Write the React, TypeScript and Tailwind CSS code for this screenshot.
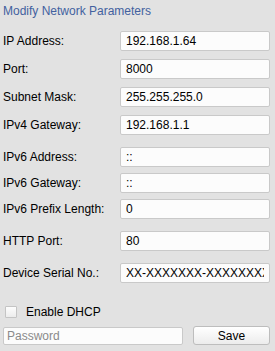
import { useState } from "react";

type Field = {
  label: string;
  value: string;
  gap: string;
};

const FIELDS: Field[] = [
  { label: "IP Address:", value: "192.168.1.64", gap: "mt-0" },
  { label: "Port:", value: "8000", gap: "mt-[8px]" },
  { label: "Subnet Mask:", value: "255.255.255.0", gap: "mt-[8px]" },
  { label: "IPv4 Gateway:", value: "192.168.1.1", gap: "mt-[8px]" },
  { label: "IPv6 Address:", value: "::", gap: "mt-[12px]" },
  { label: "IPv6 Gateway:", value: "::", gap: "mt-[6px]" },
  { label: "IPv6 Prefix Length:", value: "0", gap: "mt-[6px]" },
  { label: "HTTP Port:", value: "80", gap: "mt-[12px]" },
  { label: "Device Serial No.:", value: "XX-XXXXXXX-XXXXXXXX", gap: "mt-[12px]" },
];

export default function App() {
  const [values, setValues] = useState(FIELDS.map((f) => f.value));
  const [dhcp, setDhcp] = useState(false);
  const [password, setPassword] = useState("");

  return (
    <div className="w-[275px] h-[351px] bg-[#e2e2e2] text-[12px] text-black font-['Liberation_Sans',Arial,sans-serif] overflow-hidden">
      <div className="pl-[3px] pt-[4px] h-[31px] text-[12px] leading-[14px] text-[#42619f]">
        Modify Network Parameters
      </div>

      <div className="flex flex-col">
        {FIELDS.map((f, i) => (
          <div key={f.label} className={`flex items-center h-[20px] ${f.gap}`}>
            <label className="w-[120px] pl-[3px] shrink-0 leading-[14px]">{f.label}</label>
            <input
              value={values[i]}
              onChange={(e) => setValues(values.map((v, j) => (j === i ? e.target.value : v)))}
              className="w-[150px] h-[20px] px-[5px] bg-[#fcfcfc] border border-[#c9c9c9] rounded-[2px] text-[12px] text-black outline-none"
            />
          </div>
        ))}
      </div>

      {/* DHCP */}
      <label className="flex items-center h-[13px] mt-[22px] pl-[5px] gap-[9px]">
        <span
          onClick={() => setDhcp(!dhcp)}
          className="w-[12px] h-[12px] border border-[#c4c4c4] rounded-[1px] bg-gradient-to-b from-[#fdfdfd] to-[#ececec] flex items-center justify-center text-[9px] leading-none"
        >
          {dhcp ? "✓" : ""}
        </span>
        <span className="leading-[14px]">Enable DHCP</span>
      </label>

      <div className="flex items-center mt-[8px] pl-[3px] gap-[10px]">
        <input
          type="password"
          value={password}
          onChange={(e) => setPassword(e.target.value)}
          placeholder="Password"
          className="w-[180px] h-[18px] px-[3px] bg-[#fcfcfc] border border-[#c9c9c9] rounded-[2px] text-[12px] placeholder:text-[#8a8a8a] outline-none"
        />
        <button className="w-[77px] h-[19px] border border-[#bdbdbd] rounded-[3px] bg-gradient-to-b from-[#ffffff] to-[#ececec] text-[12px] leading-none text-black">
          Save
        </button>
      </div>
    </div>
  );
}
